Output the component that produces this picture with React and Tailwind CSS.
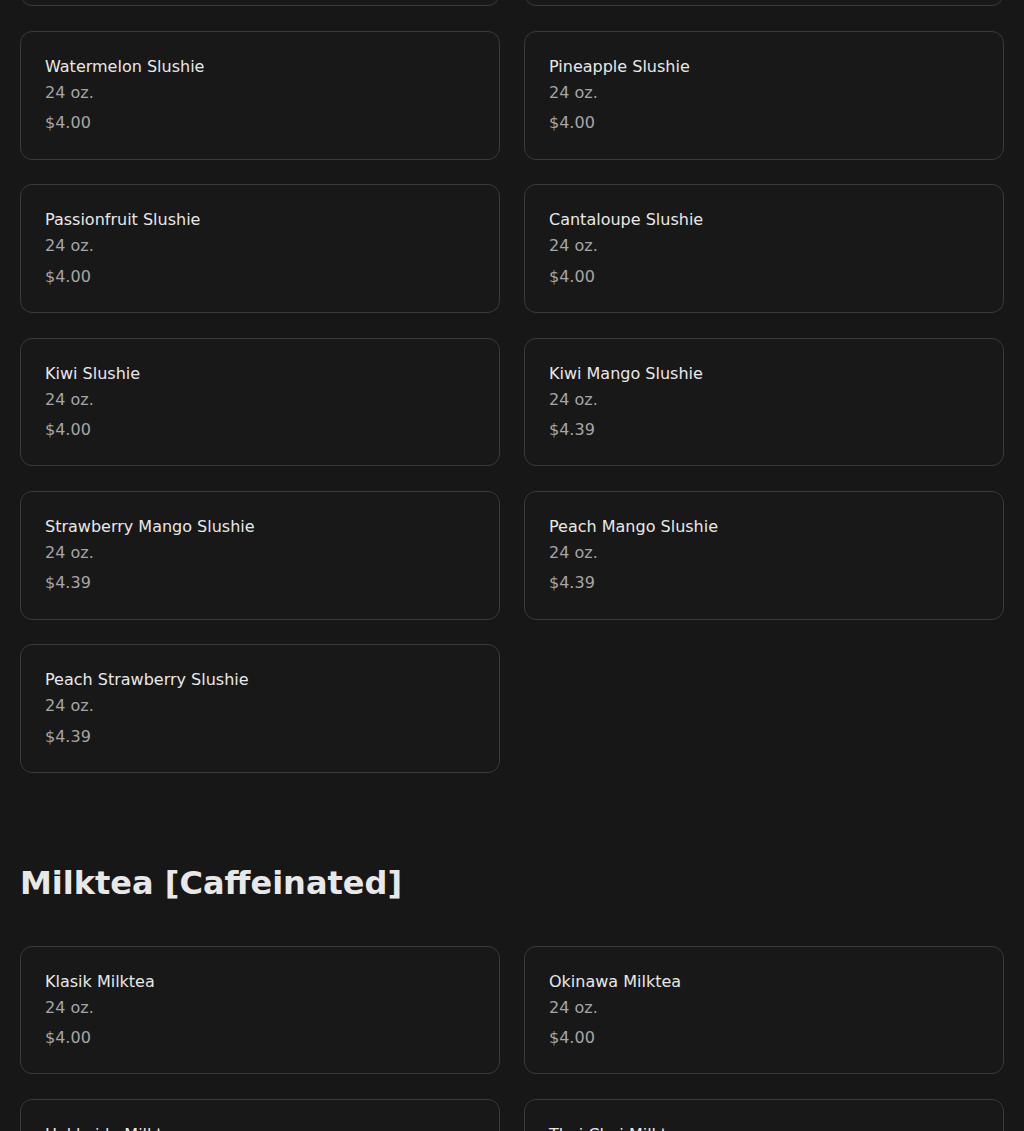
import React from 'react';

const slushies = [
  { name: 'Mango Slushie', size: '24 oz.', price: '$4.00' },
  { name: 'Strawberry Slushie', size: '24 oz.', price: '$4.00' },
  { name: 'Watermelon Slushie', size: '24 oz.', price: '$4.00' },
  { name: 'Pineapple Slushie', size: '24 oz.', price: '$4.00' },
  { name: 'Passionfruit Slushie', size: '24 oz.', price: '$4.00' },
  { name: 'Cantaloupe Slushie', size: '24 oz.', price: '$4.00' },
  { name: 'Kiwi Slushie', size: '24 oz.', price: '$4.00' },
  { name: 'Kiwi Mango Slushie', size: '24 oz.', price: '$4.39' },
  { name: 'Strawberry Mango Slushie', size: '24 oz.', price: '$4.39' },
  { name: 'Peach Mango Slushie', size: '24 oz.', price: '$4.39' },
  { name: 'Peach Strawberry Slushie', size: '24 oz.', price: '$4.39' },
];

const milkteas = [
  { name: 'Klasik Milktea', size: '24 oz.', price: '$4.00' },
  { name: 'Okinawa Milktea', size: '24 oz.', price: '$4.00' },
  { name: 'Hokkaido Milktea', size: '24 oz.', price: '$4.00' },
  { name: 'Thai Chai Milktea', size: '24 oz.', price: '$4.00' },
];

function MenuCard({ item }) {
  return (
    <div className="rounded-xl border border-[#3a3a3a] bg-[#181818] px-6 pt-[23px] pb-[23.33px]">
      <p className="text-base leading-6 text-[#e8e8e8]">{item.name}</p>
      <p className="mt-0.5 text-base leading-6 text-[#a6a6a6]">{item.size}</p>
      <p className="mt-[6.33px] text-base leading-6 text-[#a6a6a6]">{item.price}</p>
    </div>
  );
}

export default function App() {
  return (
    <div className="h-screen overflow-hidden bg-[#171717] font-['DejaVu_Sans',sans-serif]">
      <div className="-mt-[122.33px] px-5">
        {/* Slushies (scrolled part) */}
        <div className="grid grid-cols-[repeat(2,minmax(0,1fr))] gap-x-6 gap-y-[24.67px]">
          {slushies.map((item) => (
            <MenuCard key={item.name} item={item} />
          ))}
        </div>

        {/* Milktea section */}
        <h2 className="mt-[89.67px] text-[32px] font-bold leading-10 text-[#e8e8e8]">Milktea [Caffeinated]</h2>
        <div className="mt-[43px] grid grid-cols-[repeat(2,minmax(0,1fr))] gap-x-6 gap-y-[24.67px]">
          {milkteas.map((item) => (
            <MenuCard key={item.name} item={item} />
          ))}
        </div>
      </div>
    </div>
  );
}
